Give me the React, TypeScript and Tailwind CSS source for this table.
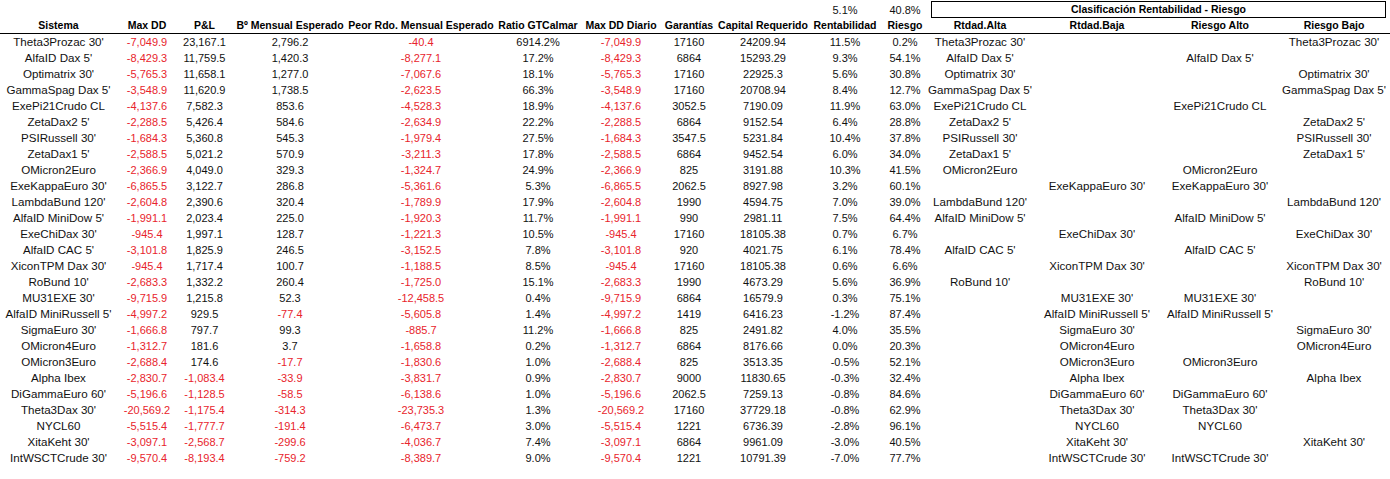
import React from "react";

type Row = [string, string, string, string, string, string, string, string, string, string, string];

const rows: Row[] = [
  ["Theta3Prozac 30'", "-7,049.9", "23,167.1", "2,796.2", "-40.4", "6914.2%", "-7,049.9", "17160", "24209.94", "11.5%", "0.2%"],
  ["AlfaID Dax 5'", "-8,429.3", "11,759.5", "1,420.3", "-8,277.1", "17.2%", "-8,429.3", "6864", "15293.29", "9.3%", "54.1%"],
  ["Optimatrix 30'", "-5,765.3", "11,658.1", "1,277.0", "-7,067.6", "18.1%", "-5,765.3", "17160", "22925.3", "5.6%", "30.8%"],
  ["GammaSpag Dax 5'", "-3,548.9", "11,620.9", "1,738.5", "-2,623.5", "66.3%", "-3,548.9", "17160", "20708.94", "8.4%", "12.7%"],
  ["ExePi21Crudo CL", "-4,137.6", "7,582.3", "853.6", "-4,528.3", "18.9%", "-4,137.6", "3052.5", "7190.09", "11.9%", "63.0%"],
  ["ZetaDax2 5'", "-2,288.5", "5,426.4", "584.6", "-2,634.9", "22.2%", "-2,288.5", "6864", "9152.54", "6.4%", "28.8%"],
  ["PSIRussell 30'", "-1,684.3", "5,360.8", "545.3", "-1,979.4", "27.5%", "-1,684.3", "3547.5", "5231.84", "10.4%", "37.8%"],
  ["ZetaDax1 5'", "-2,588.5", "5,021.2", "570.9", "-3,211.3", "17.8%", "-2,588.5", "6864", "9452.54", "6.0%", "34.0%"],
  ["OMicron2Euro", "-2,366.9", "4,049.0", "329.3", "-1,324.7", "24.9%", "-2,366.9", "825", "3191.88", "10.3%", "41.5%"],
  ["ExeKappaEuro 30'", "-6,865.5", "3,122.7", "286.8", "-5,361.6", "5.3%", "-6,865.5", "2062.5", "8927.98", "3.2%", "60.1%"],
  ["LambdaBund 120'", "-2,604.8", "2,390.6", "320.4", "-1,789.9", "17.9%", "-2,604.8", "1990", "4594.75", "7.0%", "39.0%"],
  ["AlfaID MiniDow 5'", "-1,991.1", "2,023.4", "225.0", "-1,920.3", "11.7%", "-1,991.1", "990", "2981.11", "7.5%", "64.4%"],
  ["ExeChiDax 30'", "-945.4", "1,997.1", "128.7", "-1,221.3", "10.5%", "-945.4", "17160", "18105.38", "0.7%", "6.7%"],
  ["AlfaID CAC 5'", "-3,101.8", "1,825.9", "246.5", "-3,152.5", "7.8%", "-3,101.8", "920", "4021.75", "6.1%", "78.4%"],
  ["XiconTPM Dax 30'", "-945.4", "1,717.4", "100.7", "-1,188.5", "8.5%", "-945.4", "17160", "18105.38", "0.6%", "6.6%"],
  ["RoBund 10'", "-2,683.3", "1,332.2", "260.4", "-1,725.0", "15.1%", "-2,683.3", "1990", "4673.29", "5.6%", "36.9%"],
  ["MU31EXE 30'", "-9,715.9", "1,215.8", "52.3", "-12,458.5", "0.4%", "-9,715.9", "6864", "16579.9", "0.3%", "75.1%"],
  ["AlfaID MiniRussell 5'", "-4,997.2", "929.5", "-77.4", "-5,605.8", "1.4%", "-4,997.2", "1419", "6416.23", "-1.2%", "87.4%"],
  ["SigmaEuro 30'", "-1,666.8", "797.7", "99.3", "-885.7", "11.2%", "-1,666.8", "825", "2491.82", "4.0%", "35.5%"],
  ["OMicron4Euro", "-1,312.7", "181.6", "3.7", "-1,658.8", "0.2%", "-1,312.7", "6864", "8176.66", "0.0%", "20.3%"],
  ["OMicron3Euro", "-2,688.4", "174.6", "-17.7", "-1,830.6", "1.0%", "-2,688.4", "825", "3513.35", "-0.5%", "52.1%"],
  ["Alpha Ibex", "-2,830.7", "-1,083.4", "-33.9", "-3,831.7", "0.9%", "-2,830.7", "9000", "11830.65", "-0.3%", "32.4%"],
  ["DiGammaEuro 60'", "-5,196.6", "-1,128.5", "-58.5", "-6,138.6", "1.0%", "-5,196.6", "2062.5", "7259.13", "-0.8%", "84.6%"],
  ["Theta3Dax 30'", "-20,569.2", "-1,175.4", "-314.3", "-23,735.3", "1.3%", "-20,569.2", "17160", "37729.18", "-0.8%", "62.9%"],
  ["NYCL60", "-5,515.4", "-1,777.7", "-191.4", "-6,473.7", "3.0%", "-5,515.4", "1221", "6736.39", "-2.8%", "96.1%"],
  ["XitaKeht 30'", "-3,097.1", "-2,568.7", "-299.6", "-4,036.7", "7.4%", "-3,097.1", "6864", "9961.09", "-3.0%", "40.5%"],
  ["IntWSCTCrude 30'", "-9,570.4", "-8,193.4", "-759.2", "-8,389.7", "9.0%", "-9,570.4", "1221", "10791.39", "-7.0%", "77.7%"],
];

const headers = [
  "Sistema",
  "Max DD",
  "P&L",
  "Bº Mensual Esperado",
  "Peor Rdo. Mensual Esperado",
  "Ratio GTCalmar",
  "Max DD Diario",
  "Garantías",
  "Capital Requerido",
  "Rentabilidad",
  "Riesgo",
  "Rtdad.Alta",
  "Rtdad.Baja",
  "Riesgo Alto",
  "Riesgo Bajo",
];

// columns whose negative values are shown in red
const redCols = [1, 2, 3, 4, 6];

const RENT_AVG = 5.1;
const RISK_AVG = 40.8;

function Cell({ children, red, name }: { children?: React.ReactNode; red?: boolean; name?: boolean }) {
  return (
    <div
      className={`h-4 leading-4 text-center whitespace-nowrap ${name ? "text-[11.6px]" : "text-[11px]"} ${
        red ? "text-[#e8242c]" : "text-[#111]"
      }`}
    >
      {children}
    </div>
  );
}

export default function App() {
  return (
    <div
      className="min-h-screen bg-white pt-[2px]"
      style={{ fontFamily: '"Liberation Sans", Arial, sans-serif' }}
    >
      <div className="grid grid-cols-[117px_60px_55px_116px_146px_88px_78px_58px_90px_74px_46px_104px_130px_116px_112px]">
        {/* top row: averages + classification box */}
        <div className="col-span-9 h-4" />
        <Cell>5.1%</Cell>
        <Cell>40.8%</Cell>
        <div className="col-span-4 h-4 pl-[3px] pr-[4px]">
          <div className="h-[17px] -mt-px border border-black flex items-center justify-center text-[10.5px] font-bold text-black whitespace-nowrap">
            Clasificación Rentabilidad - Riesgo
          </div>
        </div>

        {/* header row */}
        {headers.map((h) => (
          <div
            key={h}
            className="h-4 leading-[15px] border-b border-black text-center whitespace-nowrap text-[10.5px] font-bold text-black"
          >
            {h}
          </div>
        ))}

        {/* data */}
        {rows.map((r) => {
          const rent = parseFloat(r[9]);
          const risk = parseFloat(r[10]);
          const name = r[0];
          return (
            <React.Fragment key={name}>
              {r.map((v, i) => (
                <Cell key={i} name={i === 0} red={redCols.includes(i) && v.startsWith("-")}>
                  {v}
                </Cell>
              ))}
              <Cell name>{rent > RENT_AVG ? name : ""}</Cell>
              <Cell name>{rent <= RENT_AVG ? name : ""}</Cell>
              <Cell name>{risk > RISK_AVG ? name : ""}</Cell>
              <Cell name>{risk <= RISK_AVG ? name : ""}</Cell>
            </React.Fragment>
          );
        })}
      </div>
    </div>
  );
}
